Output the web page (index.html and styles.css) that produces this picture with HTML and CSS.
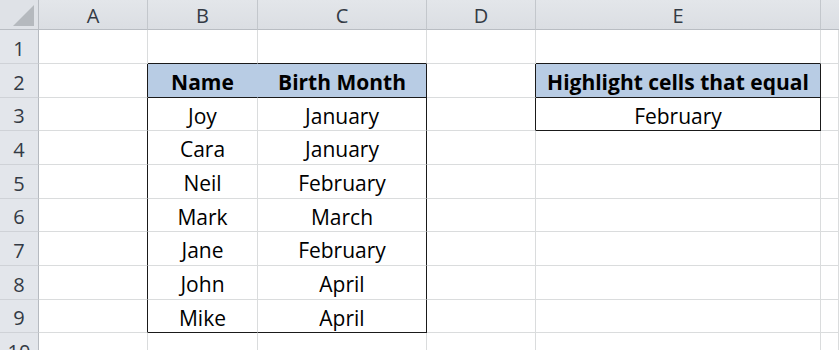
FILE: index.html
```html
<!DOCTYPE html>
<html>
<head>
<meta charset="utf-8">
<link rel="stylesheet" href="styles.css">
</head>
<body>
<div class="sheet">
  <div class="corner"><span class="tri"></span></div>
  <div class="colh">A</div><div class="colh">B</div><div class="colh">C</div><div class="colh">D</div><div class="colh">E</div><div class="colh last"></div>

  <div class="rowh">1</div>
  <div class="c"></div><div class="c bb"></div><div class="c bb"></div><div class="c"></div><div class="c bb"></div><div class="c"></div>

  <div class="rowh">2</div>
  <div class="c br"></div><div class="c hd bb br-fill">Name</div><div class="c hd bb br">Birth Month</div><div class="c br"></div><div class="c hd bb br">Highlight cells that equal</div><div class="c"></div>

  <div class="rowh">3</div>
  <div class="c br"></div><div class="c">Joy</div><div class="c br">January</div><div class="c br"></div><div class="c bb br">February</div><div class="c"></div>

  <div class="rowh">4</div>
  <div class="c br"></div><div class="c">Cara</div><div class="c br">January</div><div class="c"></div><div class="c"></div><div class="c"></div>

  <div class="rowh">5</div>
  <div class="c br"></div><div class="c">Neil</div><div class="c br">February</div><div class="c"></div><div class="c"></div><div class="c"></div>

  <div class="rowh">6</div>
  <div class="c br"></div><div class="c">Mark</div><div class="c br">March</div><div class="c"></div><div class="c"></div><div class="c"></div>

  <div class="rowh">7</div>
  <div class="c br"></div><div class="c">Jane</div><div class="c br">February</div><div class="c"></div><div class="c"></div><div class="c"></div>

  <div class="rowh">8</div>
  <div class="c br"></div><div class="c">John</div><div class="c br">April</div><div class="c"></div><div class="c"></div><div class="c"></div>

  <div class="rowh">9</div>
  <div class="c br"></div><div class="c bb">Mike</div><div class="c bb br">April</div><div class="c"></div><div class="c"></div><div class="c"></div>

  <div class="rowh">10</div>
  <div class="c"></div><div class="c"></div><div class="c"></div><div class="c"></div><div class="c"></div><div class="c"></div>
</div>
</body>
</html>
```
FILE: styles.css
```css
html, body {
  margin: 0;
  padding: 0;
  background: #ffffff;
  overflow: hidden;
}
.sheet {
  display: grid;
  grid-template-columns: 39px 109px 110px 169px 109px 285px 1fr;
  grid-template-rows: 30px 34px 34px 33px 34px 34px 33px 34px 34px 33px 34px;
  width: 839px;
  height: 350px;
  font-family: "Open Sans", "Noto Sans", sans-serif;
  font-size: 21px;
  color: #000;
}
.corner {
  background: #dfe2e7;
  border-right: 1px solid #b9bdc3;
  border-bottom: 1px solid #b9bdc3;
  box-sizing: border-box;
  position: relative;
}
.tri {
  position: absolute;
  left: 13px;
  top: 5px;
  width: 21px;
  height: 21px;
  background: #b5b9be;
  clip-path: polygon(100% 0, 100% 100%, 0 100%);
}
.colh {
  background: linear-gradient(#e3e6ea, #dbdee3);
  border-right: 1px solid #c3c7cc;
  border-bottom: 1px solid #b9bdc3;
  box-sizing: border-box;
  display: flex;
  align-items: center;
  justify-content: center;
  color: #333a44;
  font-size: 20px;
  padding-top: 1px;
}
.colh.last {
  border-right: none;
}
.rowh {
  background: #e3e6eb;
  border-right: 1px solid #b6bac0;
  border-bottom: 1px solid #cfd2d7;
  box-sizing: border-box;
  display: flex;
  align-items: center;
  justify-content: center;
  color: #333a44;
  font-size: 20px;
  padding-top: 3px;
}
.c {
  border-right: 1px solid #dadcdd;
  border-bottom: 1px solid #dadcdd;
  box-sizing: border-box;
  display: flex;
  align-items: center;
  justify-content: center;
  padding-top: 3px;
  white-space: nowrap;
  overflow: visible;
}
.c.hd {
  background: #b8cce4;
  font-weight: 700;
}
.c.bb {
  border-bottom-color: #1a1a1a;
}
.c.br {
  border-right-color: #1a1a1a;
}
.c.br-fill {
  border-right-color: #b8cce4;
}
```
